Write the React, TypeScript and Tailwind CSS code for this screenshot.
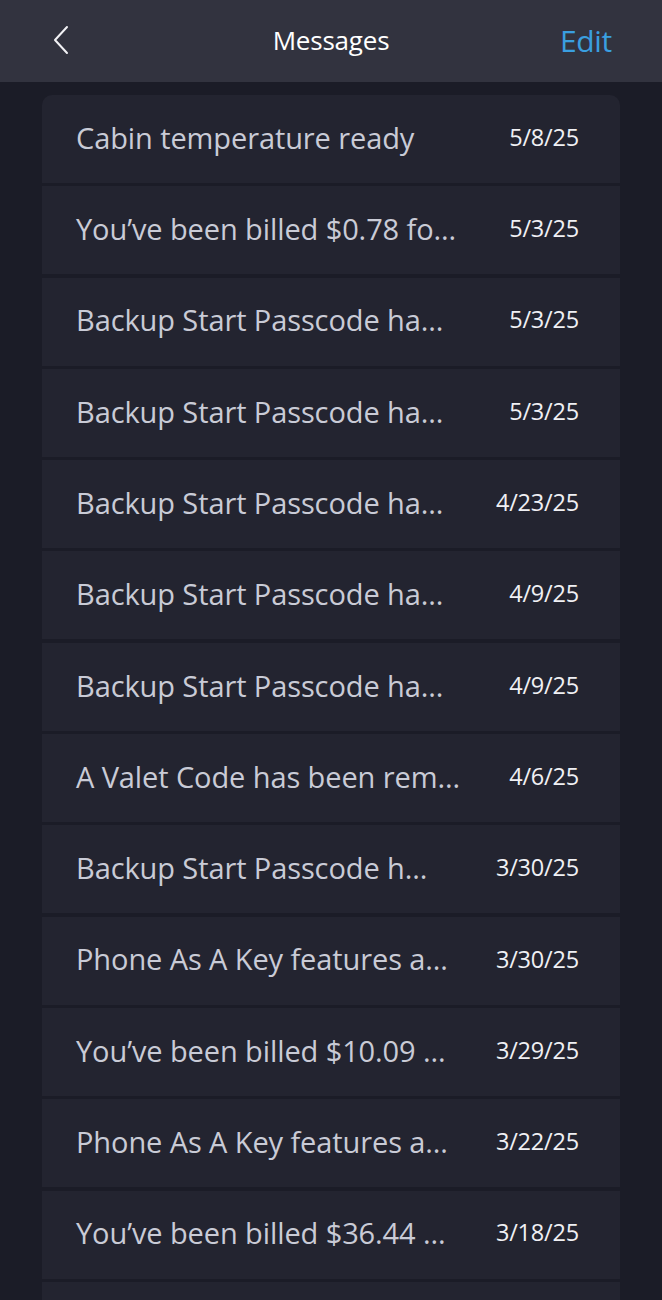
import React from "react";

const rows: [string, string][] = [
  ["Cabin temperature ready", "5/8/25"],
  ["You’ve been billed $0.78 fo...", "5/3/25"],
  ["Backup Start Passcode ha...", "5/3/25"],
  ["Backup Start Passcode ha...", "5/3/25"],
  ["Backup Start Passcode ha...", "4/23/25"],
  ["Backup Start Passcode ha...", "4/9/25"],
  ["Backup Start Passcode ha...", "4/9/25"],
  ["A Valet Code has been rem...", "4/6/25"],
  ["Backup Start Passcode h...", "3/30/25"],
  ["Phone As A Key features a...", "3/30/25"],
  ["You’ve been billed $10.09 ...", "3/29/25"],
  ["Phone As A Key features a...", "3/22/25"],
  ["You’ve been billed $36.44 ...", "3/18/25"],
  ["", ""],
];

export default function App() {
  return (
    <div
      className="w-[662px] h-[1300px] overflow-hidden bg-[#1b1c27]"
      style={{ fontFamily: '"Open Sans", "Noto Sans", sans-serif' }}
    >
      <div className="h-[82px] bg-[#32333f] flex items-center justify-between pl-[52px] pr-[50px] pb-[2px] relative">
        <svg width="18" height="30" viewBox="0 0 18 30">
          <path d="M15 2 L3 15 L15 28" fill="none" stroke="#f2f2f5" strokeWidth="2" strokeLinecap="round" strokeLinejoin="round" />
        </svg>
        <div className="absolute left-0 right-0 top-0 h-full flex items-center justify-center pb-[2px] pointer-events-none">
          <span className="text-[26px] text-white tracking-[-0.2px]">Messages</span>
        </div>
        <span className="text-[30px] text-[#3a9fe0] tracking-[-0.3px]">Edit</span>
      </div>
      <div className="pt-[13px] px-[42px] flex flex-col gap-[3.3px]">
        {rows.map(([t, d], i) => (
          <div
            key={i}
            className={`h-[88px] shrink-0 bg-[#232430] flex items-center justify-between pl-[34px] pr-[41px] pb-[3px] ${i === 0 ? "rounded-t-[10px]" : ""}`}
          >
            <span className="text-[29px] text-[#c9cbd6] tracking-[-0.1px] whitespace-nowrap">{t}</span>
            <span className="text-[23.5px] text-[#f0f0f4] tracking-[-0.2px] whitespace-nowrap">{d}</span>
          </div>
        ))}
      </div>
    </div>
  );
}
